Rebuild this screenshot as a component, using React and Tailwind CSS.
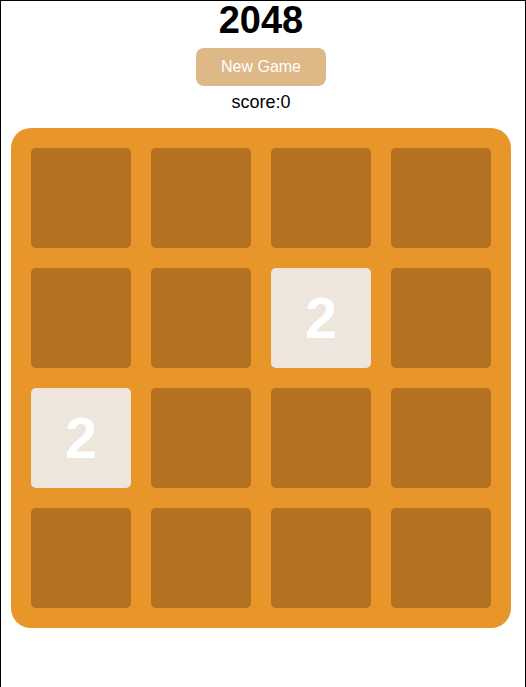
import React, { useState } from 'react';

const START = [
  [0, 0, 0, 0],
  [0, 0, 2, 0],
  [2, 0, 0, 0],
  [0, 0, 0, 0],
];

function Tile({ value }) {
  if (!value) {
    return <div className="w-[100px] h-[100px] rounded-[5px] bg-[#b37121]" />;
  }
  return (
    <div className="w-[100px] h-[100px] rounded-[5px] bg-[#eee6dd] flex items-center justify-center text-white text-[57px] font-bold leading-none">
      {value}
    </div>
  );
}

export default function App() {
  const [board, setBoard] = useState(START);
  const [score, setScore] = useState(0);

  const newGame = () => {
    setBoard(START);
    setScore(0);
  };

  return (
    <div
      className="w-[526px] h-[720px] border border-black bg-white"
      style={{ fontFamily: '"Liberation Sans", Arial, sans-serif' }}
    >
      <div className="w-[500px] ml-[10px] flex flex-col items-center">
        <h1 className="text-[38px] font-bold leading-none h-[38px] text-black">2048</h1>
        <button
          onClick={newGame}
          className="mt-[9px] w-[130px] h-[38px] rounded-lg bg-[#deb887] text-white text-base"
        >
          New Game
        </button>
        <div className="mt-[6px] text-[18px] leading-[21px] text-black">score:{score}</div>
        <div className="mt-[15px] w-[500px] h-[500px] rounded-[20px] bg-[#e8962a] p-[20px] grid grid-cols-4 gap-[20px]">
          {board.flat().map((v, i) => (
            <Tile key={i} value={v} />
          ))}
        </div>
      </div>
    </div>
  );
}
